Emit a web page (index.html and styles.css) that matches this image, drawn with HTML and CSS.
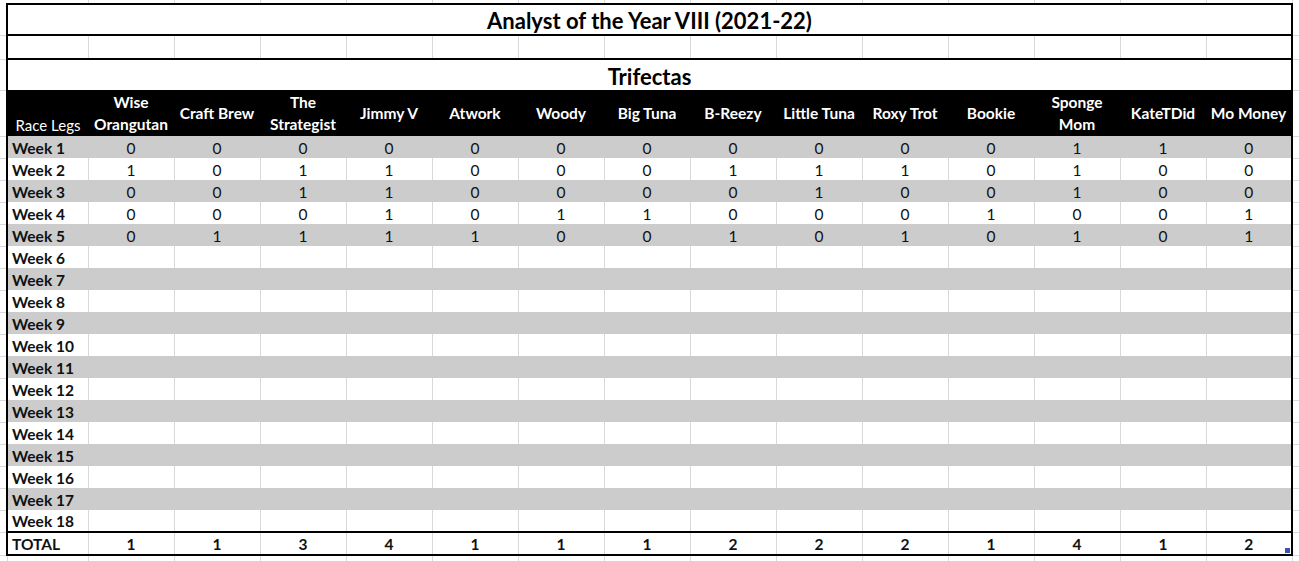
FILE: index.html
```html
<!DOCTYPE html>
<html lang="en">
<head>
<meta charset="utf-8">
<title>Analyst of the Year VIII (2021-22) - Trifectas</title>
<link rel="stylesheet" href="styles.css">
</head>
<body>
<table class="sheet">
  <colgroup>
    <col class="col-edge">
    <col class="col-label">
    <col class="col-num" span="14">
    <col class="col-edge">
  </colgroup>
  <tbody>
    <tr class="edge-top">
      <td class="a"></td><td></td><td></td><td></td><td></td><td></td><td></td><td></td><td></td><td></td><td></td><td></td><td></td><td></td><td></td><td></td><td class="q"></td>
    </tr>
    <tr class="title-row">
      <td class="a"></td>
      <td class="title" colspan="15">Analyst of the Year VIII (2021-22)</td>
      <td class="q"></td>
    </tr>
    <tr class="blank-row">
      <td class="a"></td><td></td><td></td><td></td><td></td><td></td><td></td><td></td><td></td><td></td><td></td><td></td><td></td><td></td><td></td><td></td><td class="q"></td>
    </tr>
    <tr class="sub-row">
      <td class="a"></td>
      <td class="subtitle" colspan="15">Trifectas</td>
      <td class="q"></td>
    </tr>
    <tr class="head-row">
      <td class="a"></td>
      <th class="legs">Race Legs</th>
      <th>Wise<br>Orangutan</th>
      <th>Craft Brew</th>
      <th>The<br>Strategist</th>
      <th>Jimmy V</th>
      <th>Atwork</th>
      <th>Woody</th>
      <th>Big Tuna</th>
      <th>B-Reezy</th>
      <th>Little Tuna</th>
      <th>Roxy Trot</th>
      <th>Bookie</th>
      <th>Sponge<br>Mom</th>
      <th>KateTDid</th>
      <th>Mo Money</th>
      <td class="q"></td>
    </tr>
    <tr class="wk alt"><td class="a"></td><td class="lbl">Week 1</td><td>0</td><td>0</td><td>0</td><td>0</td><td>0</td><td>0</td><td>0</td><td>0</td><td>0</td><td>0</td><td>0</td><td>1</td><td>1</td><td>0</td><td class="q"></td></tr>
    <tr class="wk"><td class="a"></td><td class="lbl">Week 2</td><td>1</td><td>0</td><td>1</td><td>1</td><td>0</td><td>0</td><td>0</td><td>1</td><td>1</td><td>1</td><td>0</td><td>1</td><td>0</td><td>0</td><td class="q"></td></tr>
    <tr class="wk alt"><td class="a"></td><td class="lbl">Week 3</td><td>0</td><td>0</td><td>1</td><td>1</td><td>0</td><td>0</td><td>0</td><td>0</td><td>1</td><td>0</td><td>0</td><td>1</td><td>0</td><td>0</td><td class="q"></td></tr>
    <tr class="wk"><td class="a"></td><td class="lbl">Week 4</td><td>0</td><td>0</td><td>0</td><td>1</td><td>0</td><td>1</td><td>1</td><td>0</td><td>0</td><td>0</td><td>1</td><td>0</td><td>0</td><td>1</td><td class="q"></td></tr>
    <tr class="wk alt"><td class="a"></td><td class="lbl">Week 5</td><td>0</td><td>1</td><td>1</td><td>1</td><td>1</td><td>0</td><td>0</td><td>1</td><td>0</td><td>1</td><td>0</td><td>1</td><td>0</td><td>1</td><td class="q"></td></tr>
    <tr class="wk"><td class="a"></td><td class="lbl">Week 6</td><td></td><td></td><td></td><td></td><td></td><td></td><td></td><td></td><td></td><td></td><td></td><td></td><td></td><td></td><td class="q"></td></tr>
    <tr class="wk alt"><td class="a"></td><td class="lbl">Week 7</td><td></td><td></td><td></td><td></td><td></td><td></td><td></td><td></td><td></td><td></td><td></td><td></td><td></td><td></td><td class="q"></td></tr>
    <tr class="wk"><td class="a"></td><td class="lbl">Week 8</td><td></td><td></td><td></td><td></td><td></td><td></td><td></td><td></td><td></td><td></td><td></td><td></td><td></td><td></td><td class="q"></td></tr>
    <tr class="wk alt"><td class="a"></td><td class="lbl">Week 9</td><td></td><td></td><td></td><td></td><td></td><td></td><td></td><td></td><td></td><td></td><td></td><td></td><td></td><td></td><td class="q"></td></tr>
    <tr class="wk"><td class="a"></td><td class="lbl">Week 10</td><td></td><td></td><td></td><td></td><td></td><td></td><td></td><td></td><td></td><td></td><td></td><td></td><td></td><td></td><td class="q"></td></tr>
    <tr class="wk alt"><td class="a"></td><td class="lbl">Week 11</td><td></td><td></td><td></td><td></td><td></td><td></td><td></td><td></td><td></td><td></td><td></td><td></td><td></td><td></td><td class="q"></td></tr>
    <tr class="wk"><td class="a"></td><td class="lbl">Week 12</td><td></td><td></td><td></td><td></td><td></td><td></td><td></td><td></td><td></td><td></td><td></td><td></td><td></td><td></td><td class="q"></td></tr>
    <tr class="wk alt"><td class="a"></td><td class="lbl">Week 13</td><td></td><td></td><td></td><td></td><td></td><td></td><td></td><td></td><td></td><td></td><td></td><td></td><td></td><td></td><td class="q"></td></tr>
    <tr class="wk"><td class="a"></td><td class="lbl">Week 14</td><td></td><td></td><td></td><td></td><td></td><td></td><td></td><td></td><td></td><td></td><td></td><td></td><td></td><td></td><td class="q"></td></tr>
    <tr class="wk alt"><td class="a"></td><td class="lbl">Week 15</td><td></td><td></td><td></td><td></td><td></td><td></td><td></td><td></td><td></td><td></td><td></td><td></td><td></td><td></td><td class="q"></td></tr>
    <tr class="wk"><td class="a"></td><td class="lbl">Week 16</td><td></td><td></td><td></td><td></td><td></td><td></td><td></td><td></td><td></td><td></td><td></td><td></td><td></td><td></td><td class="q"></td></tr>
    <tr class="wk alt"><td class="a"></td><td class="lbl">Week 17</td><td></td><td></td><td></td><td></td><td></td><td></td><td></td><td></td><td></td><td></td><td></td><td></td><td></td><td></td><td class="q"></td></tr>
    <tr class="wk"><td class="a"></td><td class="lbl">Week 18</td><td></td><td></td><td></td><td></td><td></td><td></td><td></td><td></td><td></td><td></td><td></td><td></td><td></td><td></td><td class="q"></td></tr>
    <tr class="wk total"><td class="a"></td><td class="lbl">TOTAL</td><td>1</td><td>1</td><td>3</td><td>4</td><td>1</td><td>1</td><td>1</td><td>2</td><td>2</td><td>2</td><td>1</td><td>4</td><td>1</td><td class="sel">2<span class="handle"></span></td><td class="q"></td></tr>
    <tr class="edge-bottom">
      <td class="a"></td><td></td><td></td><td></td><td></td><td></td><td></td><td></td><td></td><td></td><td></td><td></td><td></td><td></td><td></td><td></td><td class="q"></td>
    </tr>
  </tbody>
</table>
</body>
</html>
```

FILE: styles.css
```css
html, body {
  margin: 0;
  padding: 0;
  background: #ffffff;
  overflow: hidden;
}

body {
  font-family: Lato, "Liberation Sans", sans-serif;
  color: #000;
}

.sheet {
  border-collapse: collapse;
  table-layout: fixed;
  width: 1299px;
}

.col-edge { width: 7px; }
.col-label { width: 81px; }
.col-num { width: 86px; }

.sheet td,
.sheet th {
  padding: 0;
  overflow: hidden;
  white-space: nowrap;
  font-size: 15.5px;
  line-height: 18px;
}

/* outside strips (spreadsheet gridlines) */
.sheet td.a,
.sheet td.q {
  border-bottom: 1px solid #d9d9d9;
  background: #fff;
}

.edge-top { height: 4px; }
.edge-top td { border-right: 1px solid #d9d9d9; }
.edge-top td.a,
.edge-top td.q { border-right: none; border-bottom: none; }

.edge-bottom { height: 6px; }
.edge-bottom td { border-right: 1px solid #d9d9d9; }
.edge-bottom td.q { border-right: none; border-bottom: none; }

.title-row { height: 31px; }
.sheet .title {
  border: 2px solid #000;
  text-align: center;
  font-weight: 700;
  font-size: 22px;
  line-height: 26px;
  padding-top: 2px;
}

.blank-row { height: 24px; }
.blank-row td {
  border-top: 2px solid #000;
  border-bottom: 2px solid #000;
  border-right: 1px solid #d9d9d9;
}
.blank-row td.a { border: none; border-bottom: 1px solid #d9d9d9; }
.blank-row td:nth-child(2) { border-left: 2px solid #000; }
.blank-row td:nth-last-child(2) { border-right: 2px solid #000; }
.blank-row td.q { border-top: none; border-right: none; border-bottom: 1px solid #d9d9d9; }

.sub-row { height: 31px; }
.sheet .subtitle {
  border: 2px solid #000;
  border-bottom: none;
  text-align: center;
  font-weight: 700;
  font-size: 22px;
  line-height: 26px;
  padding-top: 3px;
}

.head-row { height: 46px; }
.sheet .head-row th {
  background: #000;
  color: #fff;
  font-weight: 700;
  font-size: 15.5px;
  text-align: center;
  vertical-align: middle;
  line-height: 22px;
}
.sheet .head-row th.legs {
  border-left: 2px solid #000;
  font-weight: 400;
  font-size: 15px;
  vertical-align: bottom;
  padding-bottom: 0;
}
.head-row th:nth-last-child(2) { border-right: 2px solid #000; }

.wk { height: 22px; }
.sheet .wk td {
  text-align: center;
  vertical-align: middle;
  border-right: 1px solid #d9d9d9;
  color: #111;
  padding-top: 1px;
}
.sheet .wk td.lbl {
  text-align: left;
  font-weight: 700;
  padding-left: 4px;
  border-left: 2px solid #000;
}
.wk td:nth-last-child(2) { border-right: 2px solid #000 !important; }
.sheet .wk td.a,
.sheet .wk td.q { border-right: none; }

.sheet .wk.alt td { background: #cccccc; border-right-color: #cccccc; }
.sheet .wk.alt td.a,
.sheet .wk.alt td.q { background: #fff; }

.total { height: 23px; }
.sheet .total td {
  border-top: 2px solid #000;
  border-bottom: 2px solid #000;
  font-weight: 700;
}
.sheet .total td.a,
.sheet .total td.q { border-top: none; border-bottom: 1px solid #d9d9d9; }

.sel { position: relative; }
.handle {
  position: absolute;
  right: 1px;
  bottom: 1px;
  width: 5px;
  height: 5px;
  background: #3f51b5;
}
```
